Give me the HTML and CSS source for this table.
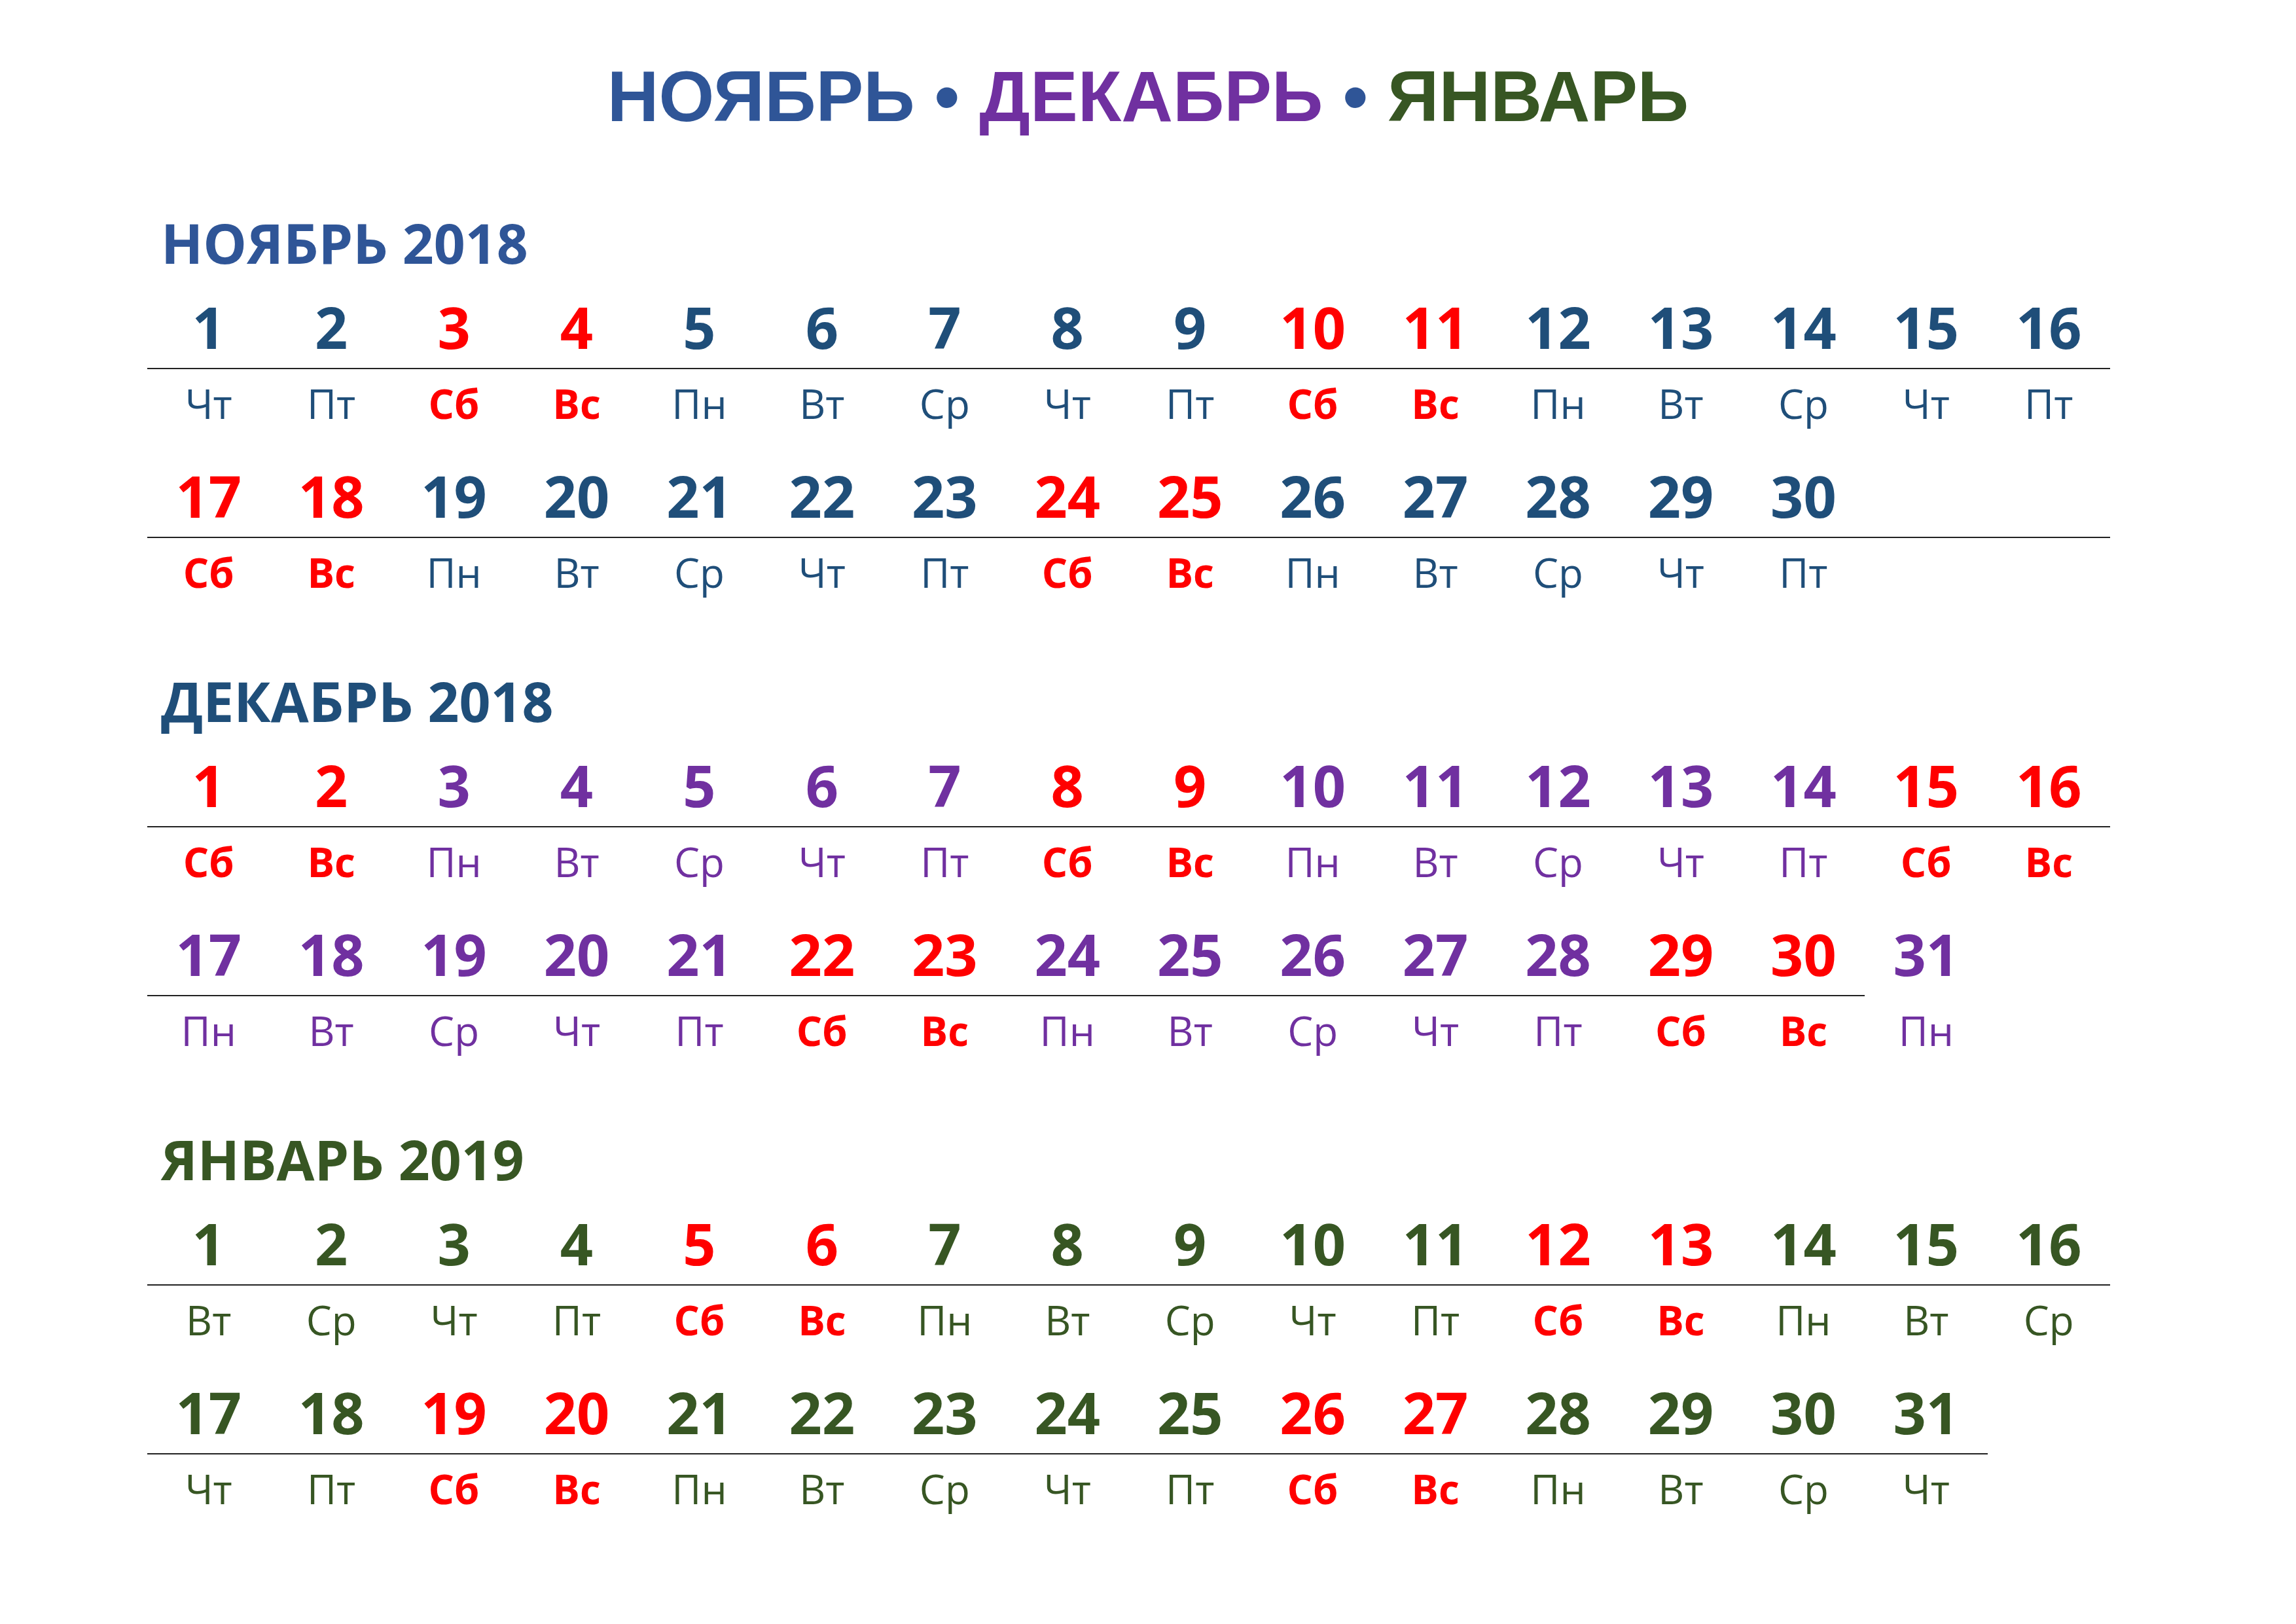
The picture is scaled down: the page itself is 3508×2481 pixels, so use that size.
FILE: index.html
```html
<!DOCTYPE html>
<html lang="ru">
<head>
<meta charset="utf-8">
<title>Календарь: ноябрь, декабрь 2018, январь 2019</title>
<link rel="stylesheet" href="styles.css">
</head>
<body>
<div class="page">
  <h1 class="title"><span class="t-nov">НОЯБРЬ</span> <span class="t-dot">•</span> <span class="t-dec">ДЕКАБРЬ</span> <span class="t-dot">•</span> <span class="t-jan">ЯНВАРЬ</span></h1>
  <div class="months">
    <section class="month nov">
      <h2 class="month-head">НОЯБРЬ 2018</h2>
      <div class="grid">
        <div class="cell"><div class="num">1</div><div class="wd">Чт</div></div>
        <div class="cell"><div class="num">2</div><div class="wd">Пт</div></div>
        <div class="cell we"><div class="num">3</div><div class="wd">Сб</div></div>
        <div class="cell we"><div class="num">4</div><div class="wd">Вс</div></div>
        <div class="cell"><div class="num">5</div><div class="wd">Пн</div></div>
        <div class="cell"><div class="num">6</div><div class="wd">Вт</div></div>
        <div class="cell"><div class="num">7</div><div class="wd">Ср</div></div>
        <div class="cell"><div class="num">8</div><div class="wd">Чт</div></div>
        <div class="cell"><div class="num">9</div><div class="wd">Пт</div></div>
        <div class="cell we"><div class="num">10</div><div class="wd">Сб</div></div>
        <div class="cell we"><div class="num">11</div><div class="wd">Вс</div></div>
        <div class="cell"><div class="num">12</div><div class="wd">Пн</div></div>
        <div class="cell"><div class="num">13</div><div class="wd">Вт</div></div>
        <div class="cell"><div class="num">14</div><div class="wd">Ср</div></div>
        <div class="cell"><div class="num">15</div><div class="wd">Чт</div></div>
        <div class="cell"><div class="num">16</div><div class="wd">Пт</div></div>
        <div class="cell we"><div class="num">17</div><div class="wd">Сб</div></div>
        <div class="cell we"><div class="num">18</div><div class="wd">Вс</div></div>
        <div class="cell"><div class="num">19</div><div class="wd">Пн</div></div>
        <div class="cell"><div class="num">20</div><div class="wd">Вт</div></div>
        <div class="cell"><div class="num">21</div><div class="wd">Ср</div></div>
        <div class="cell"><div class="num">22</div><div class="wd">Чт</div></div>
        <div class="cell"><div class="num">23</div><div class="wd">Пт</div></div>
        <div class="cell we"><div class="num">24</div><div class="wd">Сб</div></div>
        <div class="cell we"><div class="num">25</div><div class="wd">Вс</div></div>
        <div class="cell"><div class="num">26</div><div class="wd">Пн</div></div>
        <div class="cell"><div class="num">27</div><div class="wd">Вт</div></div>
        <div class="cell"><div class="num">28</div><div class="wd">Ср</div></div>
        <div class="cell"><div class="num">29</div><div class="wd">Чт</div></div>
        <div class="cell"><div class="num">30</div><div class="wd">Пт</div></div>
        <div class="cell"><div class="num"></div><div class="wd"></div></div>
        <div class="cell"><div class="num"></div><div class="wd"></div></div>
      </div>
    </section>
    <section class="month dec">
      <h2 class="month-head">ДЕКАБРЬ 2018</h2>
      <div class="grid">
        <div class="cell we"><div class="num">1</div><div class="wd">Сб</div></div>
        <div class="cell we"><div class="num">2</div><div class="wd">Вс</div></div>
        <div class="cell"><div class="num">3</div><div class="wd">Пн</div></div>
        <div class="cell"><div class="num">4</div><div class="wd">Вт</div></div>
        <div class="cell"><div class="num">5</div><div class="wd">Ср</div></div>
        <div class="cell"><div class="num">6</div><div class="wd">Чт</div></div>
        <div class="cell"><div class="num">7</div><div class="wd">Пт</div></div>
        <div class="cell we"><div class="num">8</div><div class="wd">Сб</div></div>
        <div class="cell we"><div class="num">9</div><div class="wd">Вс</div></div>
        <div class="cell"><div class="num">10</div><div class="wd">Пн</div></div>
        <div class="cell"><div class="num">11</div><div class="wd">Вт</div></div>
        <div class="cell"><div class="num">12</div><div class="wd">Ср</div></div>
        <div class="cell"><div class="num">13</div><div class="wd">Чт</div></div>
        <div class="cell"><div class="num">14</div><div class="wd">Пт</div></div>
        <div class="cell we"><div class="num">15</div><div class="wd">Сб</div></div>
        <div class="cell we"><div class="num">16</div><div class="wd">Вс</div></div>
        <div class="cell"><div class="num">17</div><div class="wd">Пн</div></div>
        <div class="cell"><div class="num">18</div><div class="wd">Вт</div></div>
        <div class="cell"><div class="num">19</div><div class="wd">Ср</div></div>
        <div class="cell"><div class="num">20</div><div class="wd">Чт</div></div>
        <div class="cell"><div class="num">21</div><div class="wd">Пт</div></div>
        <div class="cell we"><div class="num">22</div><div class="wd">Сб</div></div>
        <div class="cell we"><div class="num">23</div><div class="wd">Вс</div></div>
        <div class="cell"><div class="num">24</div><div class="wd">Пн</div></div>
        <div class="cell"><div class="num">25</div><div class="wd">Вт</div></div>
        <div class="cell"><div class="num">26</div><div class="wd">Ср</div></div>
        <div class="cell"><div class="num">27</div><div class="wd">Чт</div></div>
        <div class="cell"><div class="num">28</div><div class="wd">Пт</div></div>
        <div class="cell we"><div class="num">29</div><div class="wd">Сб</div></div>
        <div class="cell we"><div class="num">30</div><div class="wd">Вс</div></div>
        <div class="cell nl"><div class="num">31</div><div class="wd">Пн</div></div>
      </div>
    </section>
    <section class="month jan">
      <h2 class="month-head">ЯНВАРЬ 2019</h2>
      <div class="grid">
        <div class="cell"><div class="num">1</div><div class="wd">Вт</div></div>
        <div class="cell"><div class="num">2</div><div class="wd">Ср</div></div>
        <div class="cell"><div class="num">3</div><div class="wd">Чт</div></div>
        <div class="cell"><div class="num">4</div><div class="wd">Пт</div></div>
        <div class="cell we"><div class="num">5</div><div class="wd">Сб</div></div>
        <div class="cell we"><div class="num">6</div><div class="wd">Вс</div></div>
        <div class="cell"><div class="num">7</div><div class="wd">Пн</div></div>
        <div class="cell"><div class="num">8</div><div class="wd">Вт</div></div>
        <div class="cell"><div class="num">9</div><div class="wd">Ср</div></div>
        <div class="cell"><div class="num">10</div><div class="wd">Чт</div></div>
        <div class="cell"><div class="num">11</div><div class="wd">Пт</div></div>
        <div class="cell we"><div class="num">12</div><div class="wd">Сб</div></div>
        <div class="cell we"><div class="num">13</div><div class="wd">Вс</div></div>
        <div class="cell"><div class="num">14</div><div class="wd">Пн</div></div>
        <div class="cell"><div class="num">15</div><div class="wd">Вт</div></div>
        <div class="cell"><div class="num">16</div><div class="wd">Ср</div></div>
        <div class="cell"><div class="num">17</div><div class="wd">Чт</div></div>
        <div class="cell"><div class="num">18</div><div class="wd">Пт</div></div>
        <div class="cell we"><div class="num">19</div><div class="wd">Сб</div></div>
        <div class="cell we"><div class="num">20</div><div class="wd">Вс</div></div>
        <div class="cell"><div class="num">21</div><div class="wd">Пн</div></div>
        <div class="cell"><div class="num">22</div><div class="wd">Вт</div></div>
        <div class="cell"><div class="num">23</div><div class="wd">Ср</div></div>
        <div class="cell"><div class="num">24</div><div class="wd">Чт</div></div>
        <div class="cell"><div class="num">25</div><div class="wd">Пт</div></div>
        <div class="cell we"><div class="num">26</div><div class="wd">Сб</div></div>
        <div class="cell we"><div class="num">27</div><div class="wd">Вс</div></div>
        <div class="cell"><div class="num">28</div><div class="wd">Пн</div></div>
        <div class="cell"><div class="num">29</div><div class="wd">Вт</div></div>
        <div class="cell"><div class="num">30</div><div class="wd">Ср</div></div>
        <div class="cell"><div class="num">31</div><div class="wd">Чт</div></div>
      </div>
    </section>
  </div>
</div>
</body>
</html>
```
FILE: styles.css
```css
html, body {
  margin: 0;
  padding: 0;
  background: #ffffff;
}

.page {
  width: 3508px;
  height: 2481px;
  overflow: hidden;
  font-family: "Open Sans", "Noto Sans", sans-serif;
}

.title {
  margin: 0;
  padding-top: 82px;
  height: 130px;
  line-height: 130px;
  text-align: center;
  font-family: "Liberation Sans", Arial, sans-serif;
  font-weight: 700;
  font-size: 109px;
  white-space: nowrap;
}

.t-nov, .t-dot { color: #2f5597; }
.t-dec { color: #7030a0; }
.t-jan { color: #375623; }

.months {
  margin-top: 109px;
  margin-left: 225px;
  width: 2999px;
  display: flex;
  flex-direction: column;
  gap: 95px;
}

.month-head {
  margin: 0 0 15px 21px;
  font-weight: 700;
  font-size: 84px;
  line-height: 100px;
  height: 100px;
  white-space: nowrap;
}

.grid {
  display: grid;
  grid-template-columns: repeat(16, 1fr);
  row-gap: 26px;
}

.num {
  height: 126px;
  line-height: 126px;
  font-weight: 700;
  font-size: 88px;
  text-align: center;
  border-bottom: 2px solid #222222;
}

.nl .num {
  border-bottom-color: transparent;
}

.wd {
  height: 104px;
  line-height: 104px;
  font-size: 62px;
  text-align: center;
}

.nov .month-head { color: #2f5597; }
.nov .num, .nov .wd { color: #1f4e79; }

.dec .month-head { color: #1f4e79; }
.dec .num, .dec .wd { color: #7030a0; }

.jan .month-head { color: #375623; }
.jan .num, .jan .wd { color: #375623; }

.month .we .num,
.month .we .wd {
  color: #ff0000;
}

.we .wd {
  font-weight: 700;
}
```
